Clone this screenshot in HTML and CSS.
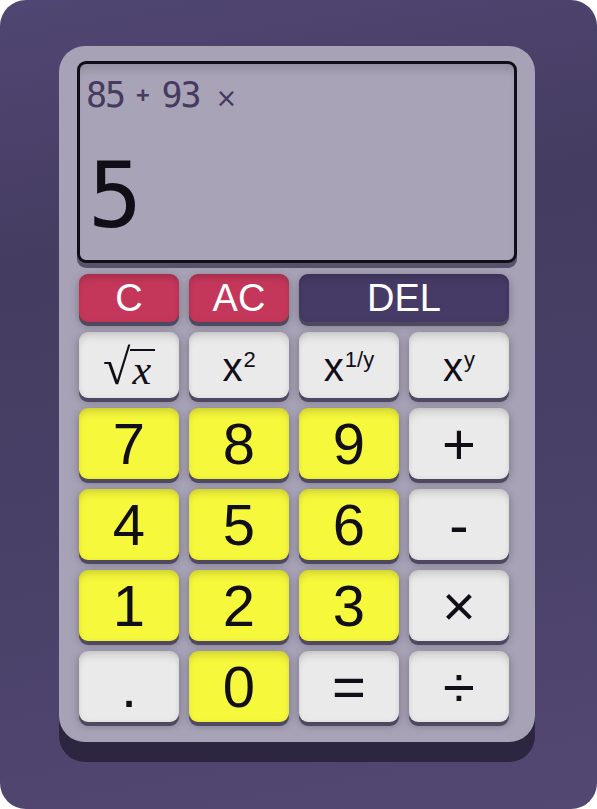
FILE: index.html
```html
<!DOCTYPE html>
<html lang="en">
<head>
<meta charset="utf-8">
<title>Calculator</title>
<link rel="stylesheet" href="styles.css">
</head>
<body>
<div class="screen">
  <div class="calc">
    <div class="display">
      <div class="expr"><span class="num">85</span><span class="op plus">+</span><span class="num">93</span><span class="op times">×</span></div>
      <div class="result">5</div>
    </div>
    <div class="keys">
      <button class="key red small">C</button>
      <button class="key red small">AC</button>
      <button class="key del small">DEL</button>
      <button class="key light fn"><span class="lbl"><span class="rad">√</span><span class="radicand">x</span></span></button>
      <button class="key light fn"><span class="lbl">x<sup class="sup">2</sup></span></button>
      <button class="key light fn"><span class="lbl">x<sup class="sup">1/y</sup></span></button>
      <button class="key light fn"><span class="lbl">x<sup class="sup">y</sup></span></button>
      <button class="key yellow">7</button>
      <button class="key yellow">8</button>
      <button class="key yellow">9</button>
      <button class="key light">+</button>
      <button class="key yellow">4</button>
      <button class="key yellow">5</button>
      <button class="key yellow">6</button>
      <button class="key light">-</button>
      <button class="key yellow">1</button>
      <button class="key yellow">2</button>
      <button class="key yellow">3</button>
      <button class="key light">×</button>
      <button class="key light">.</button>
      <button class="key yellow">0</button>
      <button class="key light">=</button>
      <button class="key light">÷</button>
    </div>
  </div>
</div>
</body>
</html>
```

FILE: styles.css
```css
html, body {
  margin: 0;
  padding: 0;
  background: #ffffff;
}

.screen {
  width: 597px;
  height: 809px;
  box-sizing: border-box;
  border-radius: 26px;
  background: linear-gradient(170deg, #504673 0%, #453c61 30%, #4a4169 65%, #524872 100%);
  padding: 46px 0 0 59px;
  display: flex;
  align-items: flex-start;
}

.calc {
  width: 476px;
  height: 696px;
  box-sizing: border-box;
  background: #a7a2b6;
  border-radius: 26px;
  padding: 15px 18px 20px;
  box-shadow: 0 20px 0 #2d2640;
}

.display {
  height: 202px;
  box-sizing: border-box;
  border: 3px solid #120e18;
  border-radius: 9px;
  background: #a8a3b7;
  box-shadow: inset 0 10px 10px -5px rgba(0, 0, 0, 0.14), 0 5px 0 #58516a;
  padding: 11px 0 0 6px;
}

.expr {
  font-family: "DejaVu Sans Mono", monospace;
  font-size: 35px;
  line-height: 40px;
  color: #453b60;
  display: flex;
  align-items: baseline;
}

.expr .num {
  letter-spacing: -2px;
}

.expr .plus {
  font-size: 22px;
  font-weight: bold;
  margin: 0 12px 0 12px;
  position: relative;
  top: -5px;
}

.expr .times {
  font-family: "DejaVu Sans", sans-serif;
  font-size: 26px;
  margin-left: 16px;
}

.result {
  margin-top: 31px;
  font-family: "DejaVu Sans Mono", monospace;
  font-size: 90px;
  line-height: 90px;
  color: #120e18;
  padding-left: 2px;
}

.keys {
  margin-top: 11px;
  padding-left: 2px;
  display: grid;
  grid-template-columns: repeat(4, 100px);
  grid-template-rows: 48px 66px repeat(4, 71px);
  gap: 10px;
}

.key {
  border: 0;
  margin: 0;
  padding: 0;
  border-radius: 9px;
  font-family: "Liberation Sans", Arial, sans-serif;
  font-size: 58px;
  line-height: 1;
  color: #120e18;
  display: flex;
  align-items: center;
  justify-content: center;
  box-shadow: inset 0 8px 8px -4px rgba(0, 0, 0, 0.14), inset 0 0 5px rgba(0, 0, 0, 0.07), 0 4px 0 #4f4861, 0 3px 8px rgba(0, 0, 0, 0.3);
}

.key.small {
  font-size: 38px;
  color: #ffffff;
}

.key.red {
  background: #c5375a;
}

.key.del {
  background: #463b66;
  grid-column: span 2;
}

.key.light {
  background: #eaeaea;
}

.key.yellow {
  background: #f6f83b;
}

.key.fn {
  font-size: 40px;
  padding-top: 4px;
  box-sizing: border-box;
}

.lbl {
  display: inline-block;
  white-space: nowrap;
}

.sup {
  font-size: 22px;
  vertical-align: 14px;
  line-height: 0;
  margin-left: 1px;
}

.rad {
  font-family: "Liberation Serif", "Times New Roman", serif;
  font-size: 50px;
  line-height: 1;
}

.radicand {
  font-family: "Liberation Serif", "Times New Roman", serif;
  font-style: italic;
  font-size: 42px;
  line-height: 38px;
  border-top: 2px solid #120e18;
  padding: 0 4px 0 2px;
  display: inline-block;
}
```
